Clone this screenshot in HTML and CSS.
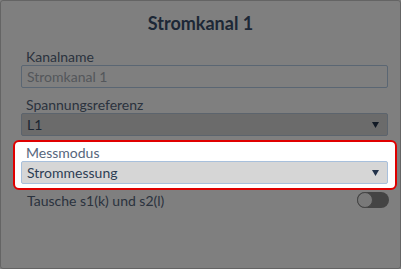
FILE: index.html
```html
<!DOCTYPE html>
<html lang="de">
<head>
<meta charset="utf-8">
<title>Stromkanal 1</title>
<link rel="stylesheet" href="styles.css">
</head>
<body>
<div class="dialog">
  <h1 class="title">Stromkanal 1</h1>
  <div class="form">
    <div class="field">
      <label class="label">Kanalname</label>
      <div class="input">Stromkanal 1</div>
    </div>
    <div class="field">
      <label class="label">Spannungsreferenz</label>
      <div class="select"><span>L1</span><svg class="caret" width="7" height="6" viewBox="0 0 7 6"><polygon points="0,0 7,0 3.5,6" fill="#22324a"/></svg></div>
    </div>
    <div class="field field--focus">
      <label class="label">Messmodus</label>
      <div class="select select--light"><span>Strommessung</span><svg class="caret" width="7" height="6" viewBox="0 0 7 6"><polygon points="0,0 7,0 3.5,6" fill="#22324a"/></svg></div>
    </div>
    <div class="toggle-row">
      <span class="toggle-label">Tausche s1(k) und s2(l)</span>
      <span class="toggle"><span class="knob"></span></span>
    </div>
  </div>
  <div class="overlay"></div>
</div>
</body>
</html>
```
FILE: styles.css
```css
* { box-sizing: border-box; }
html, body { margin: 0; padding: 0; }
body {
  font-family: Lato, "Liberation Sans", sans-serif;
  background: #fff;
  color: #3c4c60;
}
.dialog {
  width: 401px;
  height: 269px;
  border: 1px solid #c8c8c8;
  border-radius: 3px;
  background: #fff;
  overflow: hidden;
}
.title {
  margin: 0;
  padding-top: 10px;
  height: 43px;
  text-align: center;
  font-size: 18px;
  font-weight: 700;
  line-height: 24px;
  color: #3a4f6c;
}
.form {
  padding: 0 3px 0 12px;
  display: flex;
  flex-direction: column;
}
.field {
  border: 2px solid transparent;
  border-radius: 6px;
  padding: 2px 7px 2px 6px;
  display: flex;
  flex-direction: column;
}
.label {
  display: block;
  padding-left: 5px;
  font-size: 14px;
  line-height: 17px;
  color: #56667c;
}
.input, .select {
  height: 23px;
  border: 1px solid #b4cce6;
  border-radius: 2px;
  padding: 0 5px;
  font-size: 14px;
  line-height: 21px;
  display: flex;
  align-items: center;
  justify-content: space-between;
}
.input {
  background: #fff;
  color: #a8aeb6;
}
.select {
  background: #d6d6d6;
  border-color: #b8c8da;
  color: #3a4c64;
}
.select--light {
  border-color: #a8c0dc;
  color: #2e3e54;
}
.caret { margin-right: 3px; }
.field--focus {
  position: relative;
  z-index: 2;
  background: #fff;
  border-color: #e00000;
  padding-bottom: 4px;
}
.toggle-row {
  margin-top: 2px;
  padding: 0 8px 0 14px;
  display: flex;
  align-items: center;
  justify-content: space-between;
  height: 16px;
}
.toggle-label {
  font-size: 14px;
  color: #56667c;
}
.toggle {
  width: 32px;
  height: 16px;
  border-radius: 8px;
  background: #888;
  display: flex;
  align-items: center;
}
.knob {
  width: 16px;
  height: 16px;
  border-radius: 50%;
  background: #f2f2f2;
  border: 1px solid #8a8a8a;
}
.overlay {
  position: fixed;
  inset: 0;
  z-index: 1;
  background: rgba(0, 0, 0, 0.5);
}
```
